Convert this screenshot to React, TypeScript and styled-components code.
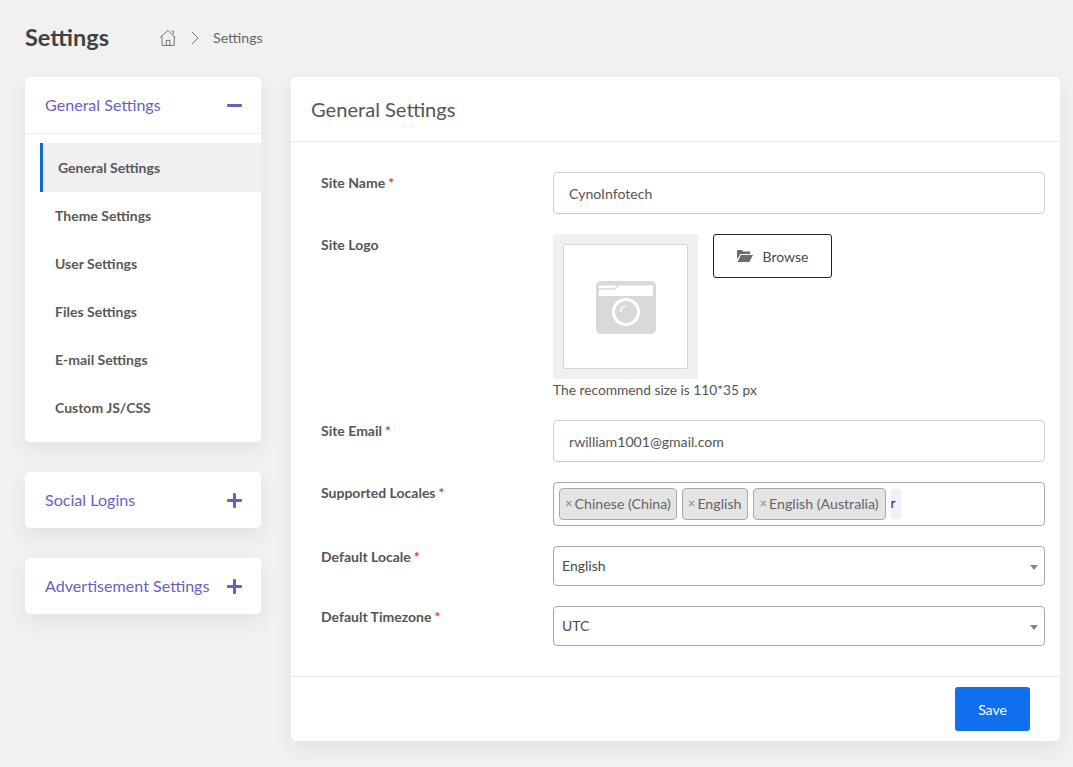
import React from "react";
import styled, { createGlobalStyle } from "styled-components";

const GlobalStyle = createGlobalStyle`
  html, body {
    margin: 0;
    padding: 0;
    background: #f1f1f3;
    font-family: "Lato", "Liberation Sans", sans-serif;
    color: #4a4a4a;
  }
  * { box-sizing: border-box; }
`;

const Page = styled.div`
  width: 1073px;
  height: 767px;
  padding: 0 13px 0 25px;
  overflow: hidden;
`;

const TopBar = styled.div`
  display: flex;
  align-items: center;
  height: 77px;
  padding-bottom: 2px;
`;

const Title = styled.h1`
  margin: 0 0 2px;
  width: 134px;
  font-size: 23.5px;
  font-weight: 700;
  color: #424242;
`;

const Crumbs = styled.div`
  display: flex;
  align-items: center;
  font-size: 14.2px;
  color: #666;

  svg { display: block; }
`;

const CrumbSep = styled.span`
  display: flex;
  margin: 0 13px 0 13px;
`;

const Columns = styled.div`
  display: grid;
  grid-template-columns: 236px 769px;
  gap: 30px;
  align-items: start;
`;

const Side = styled.aside`
  display: flex;
  flex-direction: column;
  gap: 30px;
`;

const SideCard = styled.div`
  background: #fff;
  border-radius: 5px;
  box-shadow: 0 8px 18px rgba(60, 60, 80, 0.08);
`;

const SideHead = styled.div<{ $open?: boolean }>`
  display: flex;
  align-items: center;
  justify-content: space-between;
  height: ${(p) => (p.$open ? "57px" : "56px")};
  padding: 0 19px 0 20px;
  font-size: 16.1px;
  color: #6a5fc1;
  border-bottom: ${(p) => (p.$open ? "1px solid #eeeeee" : "none")};

  span { margin-bottom: 2px; }
`;

const SideMenu = styled.div`
  padding: 9px 0 10px 15px;
`;

const SideItem = styled.div<{ $active?: boolean }>`
  display: flex;
  align-items: center;
  height: ${(p) => (p.$active ? "49px" : "48px")};
  padding-left: ${(p) => (p.$active ? "15px" : "12px")};
  padding-bottom: ${(p) => (p.$active ? "0" : "2px")};
  font-size: 14px;
  font-weight: 700;
  color: #595959;
  background: ${(p) => (p.$active ? "#f0eff1" : "transparent")};
  border-left: 3px solid ${(p) => (p.$active ? "#1565d8" : "transparent")};
`;

const Main = styled.main`
  background: #fff;
  border-radius: 5px;
  box-shadow: 0 8px 18px rgba(60, 60, 80, 0.08);
`;

const MainHead = styled.div`
  display: flex;
  align-items: center;
  height: 65px;
  padding: 0 20px;
  font-size: 20.1px;
  color: #555;
  border-bottom: 1px solid #e9e9eb;
`;

const Form = styled.div`
  display: flex;
  flex-direction: column;
  padding: 30px 15px 30px 30px;
`;

const Row = styled.div<{ $gap: number }>`
  display: grid;
  grid-template-columns: 232px 492px;
  margin-bottom: ${(p) => p.$gap}px;

  &:last-child { margin-bottom: 0; }
`;

const Label = styled.label`
  padding-top: 2px;
  font-size: 14px;
  font-weight: 700;
  line-height: 17px;
  color: #555;
`;

const Required = styled.span`
  margin-left: 3px;
  color: #e0393e;
`;

const Input = styled.div`
  display: flex;
  align-items: center;
  height: 42px;
  padding: 0 15px;
  font-size: 14.1px;
  color: #555;
  border: 1px solid #cfcfd2;
  border-radius: 4px;
`;

const LogoRow = styled.div`
  display: flex;
  align-items: flex-start;
  gap: 15px;
`;

const LogoFrame = styled.div`
  width: 145px;
  height: 145px;
  padding: 10px;
  background: #f0eff1;
  border-radius: 3px;
`;

const LogoInner = styled.div`
  display: flex;
  align-items: center;
  justify-content: center;
  width: 125px;
  height: 125px;
  padding-top: 2px;
  background: #fff;
  border: 1px solid #d5d5d8;
  border-radius: 2px;
`;

const Browse = styled.button`
  display: flex;
  align-items: center;
  justify-content: center;
  gap: 10px;
  width: 119px;
  height: 44px;
  padding: 0;
  background: #fff;
  border: 1px solid #1f2230;
  border-radius: 3px;
  font-family: inherit;
  font-size: 14px;
  color: #4a4a4a;
`;

const Hint = styled.div`
  margin-top: 2px;
  font-size: 13.75px;
  line-height: 17px;
  color: #555;
`;

const TagBox = styled.div`
  display: flex;
  align-items: center;
  height: 44px;
  padding: 0 5px;
  border: 1px solid #a9a9ad;
  border-radius: 4px;
`;

const Tag = styled.span`
  display: flex;
  align-items: center;
  height: 32px;
  margin-right: 5px;
  padding: 0 6px 2px 5px;
  font-size: 14.2px;
  color: #666;
  background: #e4e4e4;
  border: 1px solid #aaa;
  border-radius: 4px;

  &:first-child { padding-right: 5px; }
`;

const TagX = styled.span`
  margin-right: 2px;
  color: #888;
  font-size: 13px;
`;

const TagCursor = styled.span`
  display: block;
  width: 10px;
  height: 30px;
  overflow: hidden;
  font-size: 14px;
  line-height: 28px;
  color: #333;
  background: #eef1fb;
`;

const Select = styled.div`
  display: flex;
  align-items: center;
  justify-content: space-between;
  height: 40px;
  padding: 0 6px 2px 8px;
  font-size: 14px;
  color: #4a4a4a;
  border: 1px solid #a9a9ad;
  border-radius: 4px;
`;

const Caret = styled.span`
  width: 0;
  height: 0;
  margin-top: 5px;
  border-left: 4px solid transparent;
  border-right: 4px solid transparent;
  border-top: 5px solid #888;
`;

const Footer = styled.div`
  display: flex;
  justify-content: flex-end;
  height: 65px;
  padding: 10px 30px 0 0;
  border-top: 1px solid #e9e9eb;
`;

const Save = styled.button`
  width: 75px;
  height: 44px;
  background: #0f6fec;
  border: none;
  border-radius: 3px;
  font-family: inherit;
  font-size: 14px;
  color: #fff;
`;

const HomeIcon = () => (
  <svg width="18" height="18" viewBox="0 0 18 18" fill="none" stroke="#666" strokeWidth="0.9">
    <path d="M1 8.6 9 1.4l7.2 7.2" />
    <path d="M3 7.4V16.4h12.2V7.4" />
    <path d="M7.3 16.4v-5h3.6v5" />
    <path d="M12.6 2.2h1.7v3" />
  </svg>
);

const ChevronIcon = () => (
  <svg width="10" height="14" viewBox="0 0 10 14" fill="none" stroke="#777" strokeWidth="1">
    <path d="M2 1 8 7l-6 6" />
  </svg>
);

const Minus = () => (
  <svg width="15" height="15" viewBox="0 0 15 15">
    <rect x="0" y="6" width="15" height="3" rx="1" fill="#6a5fc1" />
  </svg>
);

const Plus = () => (
  <svg width="15" height="15" viewBox="0 0 15 15" fill="#6a5fc1">
    <rect x="0" y="6" width="15" height="3" rx="1" />
    <rect x="6" y="0" width="3" height="15" rx="1" />
  </svg>
);

const FolderIcon = () => (
  <svg width="16" height="12" viewBox="0 0 16 12" fill="#6b6b70">
    <path d="M0 1.2C0 .5.5 0 1.2 0h3.6l1.4 1.5h6c.6 0 1 .4 1 1V4H3.4L0 9.6z" />
    <path d="M3.9 5H16l-3.2 6.2c-.2.5-.6.8-1.1.8H.6z" />
  </svg>
);

const PhotoIcon = () => (
  <svg width="60" height="53" viewBox="0 0 60 53">
    <rect x="0" y="0" width="60" height="53" rx="5" fill="#d9d9db" />
    <rect x="3" y="4.5" width="54" height="10.5" fill="#fff" />
    <path d="M3 8h15.5l3.5-3.5" fill="none" stroke="#d9d9db" strokeWidth="1.6" />
    <circle cx="30" cy="31" r="12.5" fill="none" stroke="#fff" strokeWidth="3" />
    <path d="M24.5 31a6 6 0 0 1 5-6" fill="none" stroke="#fff" strokeWidth="1.6" />
  </svg>
);

const menu = ["General Settings", "Theme Settings", "User Settings", "Files Settings", "E-mail Settings", "Custom JS/CSS"];
const locales = ["Chinese (China)", "English", "English (Australia)"];

export default function App() {
  return (
    <Page>
      <GlobalStyle />
      <TopBar>
        <Title>Settings</Title>
        <Crumbs>
          <HomeIcon />
          <CrumbSep>
            <ChevronIcon />
          </CrumbSep>
          Settings
        </Crumbs>
      </TopBar>
      <Columns>
        <Side>
          <SideCard>
            <SideHead $open>
              <span>General Settings</span>
              <Minus />
            </SideHead>
            <SideMenu>
              {menu.map((m, i) => (
                <SideItem key={m} $active={i === 0}>
                  {m}
                </SideItem>
              ))}
            </SideMenu>
          </SideCard>
          <SideCard>
            <SideHead>
              <span>Social Logins</span>
              <Plus />
            </SideHead>
          </SideCard>
          <SideCard>
            <SideHead>
              <span>Advertisement Settings</span>
              <Plus />
            </SideHead>
          </SideCard>
        </Side>
        <Main>
          <MainHead>General Settings</MainHead>
          <Form>
            <Row $gap={20}>
              <Label>
                Site Name<Required>*</Required>
              </Label>
              <Input>CynoInfotech</Input>
            </Row>
            <Row $gap={22}>
              <Label>Site Logo</Label>
              <div>
                <LogoRow>
                  <LogoFrame>
                    <LogoInner>
                      <PhotoIcon />
                    </LogoInner>
                  </LogoFrame>
                  <Browse>
                    <FolderIcon />
                    Browse
                  </Browse>
                </LogoRow>
                <Hint>The recommend size is 110*35 px</Hint>
              </div>
            </Row>
            <Row $gap={20}>
              <Label>
                Site Email<Required>*</Required>
              </Label>
              <Input>rwilliam1001@gmail.com</Input>
            </Row>
            <Row $gap={20}>
              <Label>
                Supported Locales<Required>*</Required>
              </Label>
              <TagBox>
                {locales.map((l) => (
                  <Tag key={l}>
                    <TagX>×</TagX>
                    {l}
                  </Tag>
                ))}
                <TagCursor>r</TagCursor>
              </TagBox>
            </Row>
            <Row $gap={20}>
              <Label>
                Default Locale<Required>*</Required>
              </Label>
              <Select>
                English
                <Caret />
              </Select>
            </Row>
            <Row $gap={0}>
              <Label>
                Default Timezone<Required>*</Required>
              </Label>
              <Select>
                UTC
                <Caret />
              </Select>
            </Row>
          </Form>
          <Footer>
            <Save>Save</Save>
          </Footer>
        </Main>
      </Columns>
    </Page>
  );
}
